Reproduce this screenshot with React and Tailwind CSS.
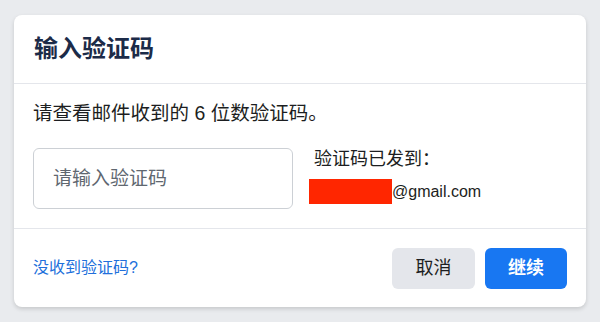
export default function App() {
    const font = { fontFamily: '"Liberation Sans", "Noto Sans CJK SC", sans-serif' }

    return (
        <div className="min-h-[322px] w-[600px] bg-[#e9ebee] pt-[15px] px-[14px]" style={font}>
            <div className="w-[572px] bg-white rounded-lg shadow-[0_2px_4px_rgba(0,0,0,0.15)] overflow-hidden">
                <div className="h-[69px] px-5 flex items-center border-b border-[#e4e6eb]">
                    <h1 className="text-[24px] font-bold text-[#1c2b48] leading-none">输入验证码</h1>
                </div>

                <div className="px-[19px] pt-[15px] pb-[19px] border-b border-[#e4e6eb]">
                    <p className="text-[19.5px] leading-[28px] text-[#1c1e21]">请查看邮件收到的 6 位数验证码。</p>

                    <div className="mt-[21px] flex gap-4">
                        <input
                            type="text"
                            placeholder="请输入验证码"
                            className="w-[260px] h-[61px] border border-[#ccd0d5] rounded-md px-[19px] text-[19px] text-[#1c1e21] placeholder:text-[#606770] outline-none"
                        />
                        <div className="flex flex-col">
                            <p className="ml-[5px] text-[18px] leading-[22px] text-[#1c1e21]">验证码已发到：</p>
                            <div className="mt-[9px] flex items-center">
                                <span className="w-[83px] h-[25px] bg-[#ff2600]"></span>
                                <span className="text-[16px] text-[#1c1e21]">@gmail.com</span>
                            </div>
                        </div>
                    </div>
                </div>

                <div className="h-[78px] pl-[19px] pr-[19px] flex items-center justify-between">
                    <a className="text-[16px] text-[#216fdb] cursor-pointer">没收到验证码?</a>
                    <div className="flex gap-[10px]">
                        <button className="w-[83px] h-[41px] rounded-md bg-[#e4e6eb] text-[18px] text-[#1c1e21]">取消</button>
                        <button className="w-[82px] h-[41px] rounded-md bg-[#1877f2] text-[18px] text-white font-semibold">继续</button>
                    </div>
                </div>
            </div>
        </div>
    )
}
